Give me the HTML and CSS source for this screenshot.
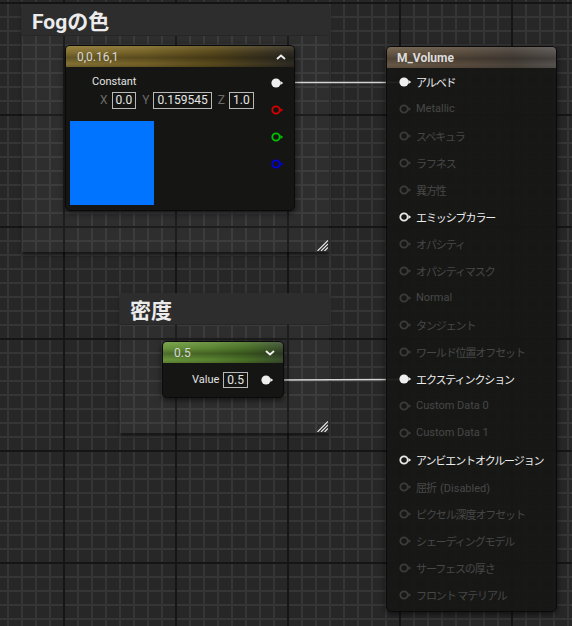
FILE: index.html
```html
<!DOCTYPE html>
<html>
<head>
<meta charset="utf-8">
<link rel="stylesheet" href="styles.css">
</head>
<body>
<div class="canvas">
  <div class="comment comment-fog">
    <div class="comment-head">Fogの色</div>
    <svg class="hatch" width="11" height="11" viewBox="0 0 11 11"><path d="M0.5 11 L11 0.5 M4 11 L11 4 M7.5 11 L11 7.5" stroke="#e6e6e6" stroke-width="1.2"/></svg>
  </div>
  <div class="comment comment-density">
    <div class="comment-head">密度</div>
    <svg class="hatch" width="11" height="11" viewBox="0 0 11 11"><path d="M0.5 11 L11 0.5 M4 11 L11 4 M7.5 11 L11 7.5" stroke="#e6e6e6" stroke-width="1.2"/></svg>
  </div>

  <svg class="wires" width="572" height="626" viewBox="0 0 572 626">
    <path d="M283 82.5 L400 82.5" stroke="#d4d4d4" stroke-width="1.5" fill="none"/>
    <path d="M273 380 C330 380 340 379.5 400 379.5" stroke="#d4d4d4" stroke-width="1.5" fill="none"/>
  </svg>

  <div class="node node-const">
    <div class="node-head head-gold">
      <span class="head-title">0,0.16,1</span>
      <svg class="chev" width="10" height="6" viewBox="0 0 10 6"><path d="M1 5 L5 1.5 L9 5" stroke="#f0f0f0" stroke-width="1.8" fill="none"/></svg>
    </div>
    <div class="node-body const-body">
      <div class="const-left">
        <div class="param-label">Constant</div>
        <div class="xyz">
          <span class="axis">X</span><span class="numbox">0.0</span>
          <span class="axis">Y</span><span class="numbox">0.159545</span>
          <span class="axis">Z</span><span class="numbox">1.0</span>
        </div>
        <div class="swatch"></div>
      </div>
      <div class="pin-col">
        <div class="pin-row"><svg width="13" height="10" viewBox="0 0 13 10"><circle cx="5" cy="5" r="4.6" fill="#efefef"/><path d="M9.4 2.9 L12.2 5 L9.4 7.1Z" fill="#efefef"/></svg></div>
        <div class="pin-row"><svg width="13" height="10" viewBox="0 0 13 10"><circle cx="5" cy="5" r="3.7" fill="#141512" stroke="#d40000" stroke-width="1.8"/><path d="M9.4 2.9 L12.2 5 L9.4 7.1Z" fill="#d40000"/></svg></div>
        <div class="pin-row"><svg width="13" height="10" viewBox="0 0 13 10"><circle cx="5" cy="5" r="3.7" fill="#141512" stroke="#00c000" stroke-width="1.8"/><path d="M9.4 2.9 L12.2 5 L9.4 7.1Z" fill="#00c000"/></svg></div>
        <div class="pin-row"><svg width="13" height="10" viewBox="0 0 13 10"><circle cx="5" cy="5" r="3.7" fill="#141512" stroke="#0000e0" stroke-width="1.8"/><path d="M9.4 2.9 L12.2 5 L9.4 7.1Z" fill="#0000e0"/></svg></div>
      </div>
    </div>
  </div>

  <div class="node node-scalar">
    <div class="node-head head-green">
      <span class="head-title">0.5</span>
      <svg class="chev" width="10" height="6" viewBox="0 0 10 6"><path d="M1 1 L5 4.5 L9 1" stroke="#f0f0f0" stroke-width="1.8" fill="none"/></svg>
    </div>
    <div class="node-body scalar-body">
      <span class="param-label">Value</span>
      <span class="numbox">0.5</span>
      <svg class="scalar-pin" width="13" height="10" viewBox="0 0 13 10"><circle cx="5" cy="5" r="4.6" fill="#efefef"/><path d="M9.4 2.9 L12.2 5 L9.4 7.1Z" fill="#efefef"/></svg>
    </div>
  </div>

  <div class="node node-material">
    <div class="node-head head-mat">
      <span class="head-title bold">M_Volume</span>
    </div>
    <div class="node-body mat-body">
      <div class="mat-row on"><svg width="13" height="10" viewBox="0 0 13 10"><circle cx="5" cy="5" r="4.6" fill="#efefef"/><path d="M9.4 2.9 L12.2 5 L9.4 7.1Z" fill="#efefef"/></svg><span class="ja">アルベド</span></div>
      <div class="mat-row"><svg width="13" height="10" viewBox="0 0 13 10"><circle cx="5" cy="5" r="3.7" fill="none" stroke="#3b3b3a" stroke-width="1.8"/><path d="M9.4 2.9 L12.2 5 L9.4 7.1Z" fill="#3b3b3a"/></svg><span>Metallic</span></div>
      <div class="mat-row"><svg width="13" height="10" viewBox="0 0 13 10"><circle cx="5" cy="5" r="3.7" fill="none" stroke="#3b3b3a" stroke-width="1.8"/><path d="M9.4 2.9 L12.2 5 L9.4 7.1Z" fill="#3b3b3a"/></svg><span class="ja">スペキュラ</span></div>
      <div class="mat-row"><svg width="13" height="10" viewBox="0 0 13 10"><circle cx="5" cy="5" r="3.7" fill="none" stroke="#3b3b3a" stroke-width="1.8"/><path d="M9.4 2.9 L12.2 5 L9.4 7.1Z" fill="#3b3b3a"/></svg><span class="ja">ラフネス</span></div>
      <div class="mat-row"><svg width="13" height="10" viewBox="0 0 13 10"><circle cx="5" cy="5" r="3.7" fill="none" stroke="#3b3b3a" stroke-width="1.8"/><path d="M9.4 2.9 L12.2 5 L9.4 7.1Z" fill="#3b3b3a"/></svg><span class="ja">異方性</span></div>
      <div class="mat-row on"><svg width="13" height="10" viewBox="0 0 13 10"><circle cx="5" cy="5" r="3.7" fill="none" stroke="#e8e8e8" stroke-width="1.8"/><path d="M9.4 2.9 L12.2 5 L9.4 7.1Z" fill="#e8e8e8"/></svg><span class="ja">エミッシブカラー</span></div>
      <div class="mat-row"><svg width="13" height="10" viewBox="0 0 13 10"><circle cx="5" cy="5" r="3.7" fill="none" stroke="#3b3b3a" stroke-width="1.8"/><path d="M9.4 2.9 L12.2 5 L9.4 7.1Z" fill="#3b3b3a"/></svg><span class="ja">オパシティ</span></div>
      <div class="mat-row"><svg width="13" height="10" viewBox="0 0 13 10"><circle cx="5" cy="5" r="3.7" fill="none" stroke="#3b3b3a" stroke-width="1.8"/><path d="M9.4 2.9 L12.2 5 L9.4 7.1Z" fill="#3b3b3a"/></svg><span class="ja">オパシティマスク</span></div>
      <div class="mat-row"><svg width="13" height="10" viewBox="0 0 13 10"><circle cx="5" cy="5" r="3.7" fill="none" stroke="#3b3b3a" stroke-width="1.8"/><path d="M9.4 2.9 L12.2 5 L9.4 7.1Z" fill="#3b3b3a"/></svg><span>Normal</span></div>
      <div class="mat-row"><svg width="13" height="10" viewBox="0 0 13 10"><circle cx="5" cy="5" r="3.7" fill="none" stroke="#3b3b3a" stroke-width="1.8"/><path d="M9.4 2.9 L12.2 5 L9.4 7.1Z" fill="#3b3b3a"/></svg><span class="ja">タンジェント</span></div>
      <div class="mat-row"><svg width="13" height="10" viewBox="0 0 13 10"><circle cx="5" cy="5" r="3.7" fill="none" stroke="#3b3b3a" stroke-width="1.8"/><path d="M9.4 2.9 L12.2 5 L9.4 7.1Z" fill="#3b3b3a"/></svg><span class="ja">ワールド位置オフセット</span></div>
      <div class="mat-row on"><svg width="13" height="10" viewBox="0 0 13 10"><circle cx="5" cy="5" r="4.6" fill="#efefef"/><path d="M9.4 2.9 L12.2 5 L9.4 7.1Z" fill="#efefef"/></svg><span class="ja">エクスティンクション</span></div>
      <div class="mat-row"><svg width="13" height="10" viewBox="0 0 13 10"><circle cx="5" cy="5" r="3.7" fill="none" stroke="#3b3b3a" stroke-width="1.8"/><path d="M9.4 2.9 L12.2 5 L9.4 7.1Z" fill="#3b3b3a"/></svg><span>Custom Data 0</span></div>
      <div class="mat-row"><svg width="13" height="10" viewBox="0 0 13 10"><circle cx="5" cy="5" r="3.7" fill="none" stroke="#3b3b3a" stroke-width="1.8"/><path d="M9.4 2.9 L12.2 5 L9.4 7.1Z" fill="#3b3b3a"/></svg><span>Custom Data 1</span></div>
      <div class="mat-row on"><svg width="13" height="10" viewBox="0 0 13 10"><circle cx="5" cy="5" r="3.7" fill="none" stroke="#e8e8e8" stroke-width="1.8"/><path d="M9.4 2.9 L12.2 5 L9.4 7.1Z" fill="#e8e8e8"/></svg><span class="ja">アンビエントオクルージョン</span></div>
      <div class="mat-row"><svg width="13" height="10" viewBox="0 0 13 10"><circle cx="5" cy="5" r="3.7" fill="none" stroke="#3b3b3a" stroke-width="1.8"/><path d="M9.4 2.9 L12.2 5 L9.4 7.1Z" fill="#3b3b3a"/></svg><span><span class="ja ja-gap">屈折</span> (Disabled)</span></div>
      <div class="mat-row"><svg width="13" height="10" viewBox="0 0 13 10"><circle cx="5" cy="5" r="3.7" fill="none" stroke="#3b3b3a" stroke-width="1.8"/><path d="M9.4 2.9 L12.2 5 L9.4 7.1Z" fill="#3b3b3a"/></svg><span class="ja">ピクセル深度オフセット</span></div>
      <div class="mat-row"><svg width="13" height="10" viewBox="0 0 13 10"><circle cx="5" cy="5" r="3.7" fill="none" stroke="#3b3b3a" stroke-width="1.8"/><path d="M9.4 2.9 L12.2 5 L9.4 7.1Z" fill="#3b3b3a"/></svg><span class="ja">シェーディングモデル</span></div>
      <div class="mat-row"><svg width="13" height="10" viewBox="0 0 13 10"><circle cx="5" cy="5" r="3.7" fill="none" stroke="#3b3b3a" stroke-width="1.8"/><path d="M9.4 2.9 L12.2 5 L9.4 7.1Z" fill="#3b3b3a"/></svg><span class="ja">サーフェスの厚さ</span></div>
      <div class="mat-row"><svg width="13" height="10" viewBox="0 0 13 10"><circle cx="5" cy="5" r="3.7" fill="none" stroke="#3b3b3a" stroke-width="1.8"/><path d="M9.4 2.9 L12.2 5 L9.4 7.1Z" fill="#3b3b3a"/></svg><span class="ja">フロント マテリアル</span></div>
    </div>
  </div>
</div>
</body>
</html>
```

FILE: styles.css
```css
html, body {
  margin: 0;
  padding: 0;
}
body {
  width: 572px;
  height: 626px;
  overflow: hidden;
  font-family: Roboto, "Noto Sans CJK JP", sans-serif;
  background-color: #272727;
  background-image:
    linear-gradient(to right, #151515 2px, transparent 2px),
    linear-gradient(to bottom, #151515 2px, transparent 2px),
    linear-gradient(to right, #353535 2px, transparent 2px),
    linear-gradient(to bottom, #353535 2px, transparent 2px);
  background-size: 112px 112px, 112px 112px, 14px 14px, 14px 14px;
  background-position: 63px 0, 0 2px, 7px 0, 0 2px;
}
.canvas {
  position: relative;
  width: 572px;
  height: 626px;
}

/* comments */
.comment {
  position: absolute;
  background: rgba(255, 255, 255, 0.035);
  box-shadow: 0 3px 4px rgba(0, 0, 0, 0.45);
}
.comment-fog {
  left: 22px;
  top: 4px;
  width: 307px;
  height: 248px;
}
.comment-density {
  left: 120px;
  top: 293px;
  width: 209px;
  height: 140px;
}
.comment-head {
  height: 32px;
  background: #2d2d2d;
  border-bottom: 1px solid #262626;
  color: #ececec;
  font-weight: 700;
  font-size: 21px;
  line-height: 32px;
  padding: 2px 0 0 10px;
  box-sizing: border-box;
}
.hatch {
  position: absolute;
  right: 1px;
  bottom: 1px;
}

.wires {
  position: absolute;
  left: 0;
  top: 0;
}

/* nodes */
.node {
  position: absolute;
  border-radius: 5px;
  border: 1px solid #0a0a0a;
  box-shadow: 0 2px 6px rgba(0, 0, 0, 0.6);
  overflow: hidden;
  background: #151613;
}
.node-head {
  height: 21px;
  display: flex;
  align-items: center;
  justify-content: space-between;
  padding: 0 8px 0 11px;
  box-sizing: border-box;
  color: #d6d6d6;
  font-size: 12px;
}
.head-title.bold {
  font-weight: 700;
  color: #dcdcdc;
}
.head-gold {
  background:
    linear-gradient(to bottom, rgba(255, 240, 180, 0.12) 0%, rgba(0, 0, 0, 0.05) 30%, rgba(0, 0, 0, 0.28) 55%, rgba(0, 0, 0, 0.05) 85%, rgba(0, 0, 0, 0.2) 100%),
    linear-gradient(to right, #8a7634 0%, #7a6629 35%, #5c4c1d 65%, #2f2c25 100%);
}
.head-green {
  background:
    linear-gradient(to bottom, rgba(255, 255, 255, 0.1) 0%, rgba(0, 0, 0, 0.05) 30%, rgba(0, 0, 0, 0.3) 55%, rgba(0, 0, 0, 0.05) 85%, rgba(0, 0, 0, 0.2) 100%),
    linear-gradient(to right, #6f9c3e 0%, #5f8a33 40%, #4c7428 70%, #3c5030 100%);
}
.head-mat {
  background:
    linear-gradient(to bottom, rgba(255, 255, 255, 0.08) 0%, rgba(0, 0, 0, 0.05) 30%, rgba(0, 0, 0, 0.25) 55%, rgba(0, 0, 0, 0.05) 85%, rgba(0, 0, 0, 0.15) 100%),
    linear-gradient(to right, #6d5c48 0%, #5d4f40 45%, #4e463e 75%, #5a5652 100%);
  padding-left: 10px;
}
.chev {
  display: block;
}

/* constant node */
.node-const {
  left: 65px;
  top: 45px;
  width: 230px;
  height: 166px;
  box-sizing: border-box;
}
.const-body {
  display: flex;
  justify-content: space-between;
}
.const-left {
  padding: 8px 0 0 4px;
  display: flex;
  flex-direction: column;
}
.param-label {
  color: #e2e2e2;
  font-size: 11px;
  line-height: 14px;
}
.const-left .param-label {
  margin-left: 22px;
}
.xyz {
  display: flex;
  align-items: center;
  margin: 2px 0 0 30px;
  height: 18px;
}
.axis {
  color: #6a6a6a;
  font-size: 12px;
  margin-right: 4px;
}
.numbox {
  height: 17px;
  box-sizing: border-box;
  border: 1px solid #b8b8b8;
  padding: 0 3px;
  color: #e6e6e6;
  font-size: 12px;
  line-height: 15px;
  margin-right: 6px;
}
.swatch {
  width: 84px;
  height: 84px;
  background: #0073ff;
  margin-top: 12px;
}
.pin-col {
  padding: 2px 10px 0 0;
  display: flex;
  flex-direction: column;
}
.pin-row {
  height: 27px;
  display: flex;
  align-items: center;
}
.pin-row svg {
  display: block;
}

/* scalar node */
.node-scalar {
  left: 162px;
  top: 341px;
  width: 122px;
  height: 57px;
  box-sizing: border-box;
}
.scalar-body {
  display: flex;
  align-items: center;
  justify-content: flex-end;
  height: 34px;
  padding-right: 9px;
}
.scalar-body .param-label {
  margin-right: 4px;
}
.scalar-body .numbox {
  height: 16px;
  line-height: 14px;
  margin-right: 13px;
}
.scalar-pin {
  display: block;
}

/* material node */
.node-material {
  left: 386px;
  top: 46px;
  width: 171px;
  height: 566px;
  box-sizing: border-box;
  background: rgba(22, 23, 21, 0.94);
}
.mat-body {
  padding: 0 0 0 12px;
  display: flex;
  flex-direction: column;
}
.mat-row {
  height: 27px;
  display: flex;
  align-items: center;
  gap: 4px;
  color: #474747;
  font-size: 11px;
  white-space: nowrap;
}
.mat-row svg {
  display: block;
  flex: none;
}
.mat-row .ja {
  letter-spacing: -1.1px;
}
.mat-row .ja-gap {
  margin-right: 1.5px;
}
.mat-row.on {
  color: #ececec;
}
```
